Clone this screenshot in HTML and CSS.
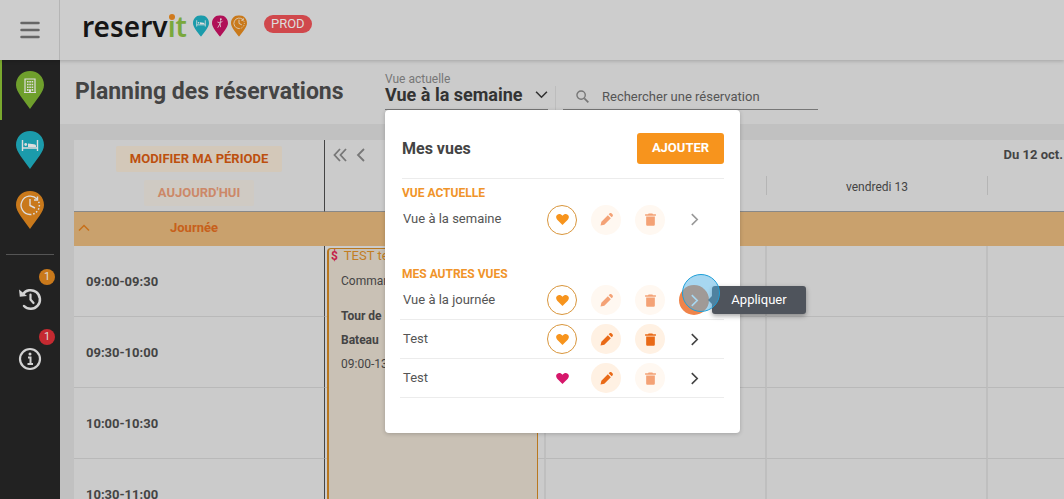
FILE: index.html
```
<!DOCTYPE html>
<html lang="fr">

<head>
  <meta charset="utf-8">
  <title>Planning des réservations</title>
  <link rel="stylesheet" href="styles.css">
</head>

<body>

  <!-- icons -->
  <svg class="sprite" aria-hidden="true">
    <symbol id="pin" viewBox="0 0 28 38">
      <path d="M14 0C6 0 0 6 0 14c0 7 8 15 14 24 6-9 14-17 14-24C28 6 22 0 14 0z" fill="currentColor"/>
    </symbol>
    <symbol id="building" viewBox="0 0 28 38">
      <path d="M9 21V8h10v13M8 21.5h12" fill="none" stroke="#ddd" stroke-width="1.2"/>
      <path d="M11 10h1.6v1.6H11zM13.3 10h1.6v1.6h-1.6zM15.6 10h1.6v1.6h-1.6zM11 12.7h1.6v1.6H11zM13.3 12.7h1.6v1.6h-1.6zM15.6 12.7h1.6v1.6h-1.6zM11 15.4h1.6V17H11zM13.3 15.4h1.6V17h-1.6zM15.6 15.4h1.6V17h-1.6zM11 18.1h1.6v1.6H11zM15.6 18.1h1.6v1.6h-1.6zM13 18.3h2V22h-2z" fill="#ddd"/>
    </symbol>
    <symbol id="bed" viewBox="0 0 28 38">
      <path d="M6.500 9v11M21.500 9v11M6.500 17h15" fill="none" stroke="#ddd" stroke-width="1.400"/>
      <circle cx="9.700" cy="13.500" r="1.400" fill="#ddd"/>
      <path d="M12 12.500l6 .8c1.300.2 2 .8 2 1.700v1h-8z" fill="#ddd"/>
    </symbol>
    <symbol id="clock" viewBox="0 0 28 38">
      <path d="M21 8A9.200 9.200 0 1 0 14 23.500" fill="none" stroke="#ddd" stroke-width="1.300"/>
      <path d="M14 23.500A9.200 9.200 0 0 0 22.300 10" fill="none" stroke="#ddd" stroke-width="1.500" stroke-dasharray="1.500 1.800"/>
      <path d="M14 8v6.500l5 2.500M21.500 5.500V9H18" fill="none" stroke="#ddd" stroke-width="1.400"/>
    </symbol>
    <symbol id="activity" viewBox="0 0 28 38">
      <circle cx="15.500" cy="7" r="1.500" fill="#ddd"/>
      <path d="M15 9l-1 6-4 7M14 15l1 6M9.500 12l5 2 4-4" fill="none" stroke="#ddd" stroke-width="1.400"/>
    </symbol>
    <symbol id="history" viewBox="0 0 24 24">
      <path d="M4.800 7.500A9.300 9.300 0 1 1 6 19" fill="none" stroke="currentColor" stroke-width="2.500" stroke-linecap="round"/>
      <path d="M1 2.500l.8 7.300 7.200-.8z" fill="currentColor"/>
      <path d="M12.500 7.500v5l3 3.500" fill="none" stroke="currentColor" stroke-width="2.200" stroke-linecap="round"/>
    </symbol>
    <symbol id="info" viewBox="0 0 24 24">
      <circle cx="12" cy="12" r="10" fill="none" stroke="currentColor" stroke-width="2.200"/>
      <path d="M10 10.500h2.500v6M9.500 17h5.500" fill="none" stroke="currentColor" stroke-width="2"/>
      <circle cx="12" cy="7" r="1.500" fill="currentColor"/>
    </symbol>
    <symbol id="heart" viewBox="0 0 24 24">
      <path d="M12 22L2.300 12.300C-.8 9.200-.2 5 2.500 3.200 5.500 1.100 9.300 2 12 5c2.700-3 6.500-3.900 9.500-1.800 2.700 1.800 3.300 6 .2 9.100z" fill="currentColor"/>
    </symbol>
    <symbol id="pencil" viewBox="0 0 24 24">
      <path d="M1 23l1.500-7L14.500 4l5.500 5.500L8 21.500zM16 2.500l1.500-1.500c1.200-1.200 3-1 4 0l1.500 1.500c1 1 1.200 2.800 0 4L21.500 8z" fill="currentColor"/>
    </symbol>
    <symbol id="trash" viewBox="0 0 24 24">
      <path d="M2 2.500h5.500l1-1.500h7l1 1.500H22V5H2zM4 6.500h16V21c0 1.500-1 2.500-2.500 2.500h-11C5 23.500 4 22.500 4 21z" fill="currentColor"/>
    </symbol>
    <symbol id="chevron" viewBox="0 0 12 12">
      <path d="M3.500 1l5 5-5 5" fill="none" stroke="currentColor" stroke-width="1.500"/>
    </symbol>
    <symbol id="search" viewBox="0 0 14 14">
      <circle cx="5.500" cy="5.500" r="4.500" fill="none" stroke="currentColor" stroke-width="1.500"/>
      <path d="M9 9l4.300 4.300" stroke="currentColor" stroke-width="1.800"/>
    </symbol>
  </svg>

  <header class="topbar">
    <button type="button" class="menu" aria-label="Menu">
      <svg width="20" height="18" viewBox="0 0 20 18"><path d="M1.500 2h17M1.500 9h17M1.500 16h17" stroke="currentColor" stroke-width="2.500" stroke-linecap="round"/></svg>
    </button>
    <a href="#" class="logo">
      <span class="logo-text">reserv<span class="logo-green"><span class="logo-i">i</span>t</span></span>
      <svg class="logo-pin blue" viewBox="0 0 28 38"><use href="#pin"/><use href="#bed"/></svg>
      <svg class="logo-pin pink" viewBox="0 0 28 38"><use href="#pin"/><use href="#activity"/></svg>
      <svg class="logo-pin orange" viewBox="0 0 28 38"><use href="#pin"/><use href="#clock"/></svg>
    </a>
    <span class="env">PROD</span>
  </header>

  <div class="page">
    <nav class="sidebar">
      <a href="#" class="side-link active" aria-label="Établissement"><svg class="side-pin green" viewBox="0 0 28 38"><use href="#pin"/><use href="#building"/></svg></a>
      <a href="#" class="side-link" aria-label="Chambres"><svg class="side-pin blue" viewBox="0 0 28 38"><use href="#pin"/><use href="#bed"/></svg></a>
      <a href="#" class="side-link" aria-label="Horaires"><svg class="side-pin orange" viewBox="0 0 28 38"><use href="#pin"/><use href="#clock"/></svg></a>
      <hr>
      <a href="#" class="side-link" aria-label="Historique"><svg class="side-icon"><use href="#history"/></svg><span class="badge">1</span></a>
      <a href="#" class="side-link" aria-label="Informations"><svg class="side-icon"><use href="#info"/></svg><span class="badge badge-red">1</span></a>
    </nav>

    <main>
      <div class="heading">
        <h1>Planning des réservations</h1>

        <div class="view">
          <span class="view-label" id="view-label">Vue actuelle</span>
          <button type="button" class="view-select" aria-describedby="view-label">
            Vue à la semaine
            <svg class="down"><use href="#chevron"/></svg>
          </button>

          <!-- views menu -->
          <section class="popup">
            <div class="popup-head">
              <h2>Mes vues</h2>
              <button type="button" class="add">AJOUTER</button>
            </div>

            <h3>VUE ACTUELLE</h3>
            <ul>
              <li>
                <span class="name">Vue à la semaine</span>
                <button type="button" class="round heart" aria-label="Favori"><svg><use href="#heart"/></svg></button>
                <button type="button" class="round off" aria-label="Modifier" disabled><svg><use href="#pencil"/></svg></button>
                <button type="button" class="round off" aria-label="Supprimer" disabled><svg><use href="#trash"/></svg></button>
                <button type="button" class="round go go-off" aria-label="Appliquer" disabled><svg><use href="#chevron"/></svg></button>
              </li>
            </ul>

            <h3 class="others">MES AUTRES VUES</h3>
            <ul class="lined">
              <li>
                <span class="name">Vue à la journée</span>
                <button type="button" class="round heart" aria-label="Favori"><svg><use href="#heart"/></svg></button>
                <button type="button" class="round off" aria-label="Modifier" disabled><svg><use href="#pencil"/></svg></button>
                <button type="button" class="round off" aria-label="Supprimer" disabled><svg><use href="#trash"/></svg></button>
                <div class="apply">
                  <button type="button" class="round go go-hover" aria-labelledby="tip"><svg><use href="#chevron"/></svg></button>
                  <span class="tooltip" role="tooltip" id="tip">Appliquer</span>
                  <span class="pointer"></span>
                </div>
              </li>
              <li>
                <span class="name">Test</span>
                <button type="button" class="round heart" aria-label="Favori"><svg><use href="#heart"/></svg></button>
                <button type="button" class="round" aria-label="Modifier"><svg><use href="#pencil"/></svg></button>
                <button type="button" class="round" aria-label="Supprimer"><svg><use href="#trash"/></svg></button>
                <button type="button" class="round go" aria-label="Appliquer"><svg><use href="#chevron"/></svg></button>
              </li>
              <li>
                <span class="name">Test</span>
                <button type="button" class="round heart-pink" aria-label="Favori"><svg><use href="#heart"/></svg></button>
                <button type="button" class="round" aria-label="Modifier"><svg><use href="#pencil"/></svg></button>
                <button type="button" class="round off" aria-label="Supprimer" disabled><svg><use href="#trash"/></svg></button>
                <button type="button" class="round go" aria-label="Appliquer"><svg><use href="#chevron"/></svg></button>
              </li>
            </ul>
          </section>
        </div>

        <label class="search">
          <svg><use href="#search"/></svg>
          <input type="text" placeholder="Rechercher une réservation" aria-label="Rechercher une réservation">
        </label>
      </div>

      <div class="board">
        <table>
          <colgroup>
            <col class="col-hours">
            <col class="col-day">
            <col class="col-day">
            <col class="col-day">
            <col>
          </colgroup>
          <thead>
            <tr class="period">
              <th rowspan="2" class="actions">
                <div class="actions-list">
                  <button type="button" class="soft">MODIFIER MA PÉRIODE</button>
                  <button type="button" class="soft" disabled>AUJOURD'HUI</button>
                </div>
              </th>
              <th colspan="4">
                <div class="range">
                  <button type="button" class="arrow" aria-label="Semaine précédente"><svg width="14" height="14" viewBox="0 0 14 14"><path d="M7 1L1.500 7 7 13M13 1L7.500 7l5.500 6" fill="none" stroke="currentColor" stroke-width="1.800"/></svg></button>
                  <button type="button" class="arrow" aria-label="Jour précédent"><svg width="14" height="14" viewBox="0 0 14 14"><path d="M10 1L4 7l6 6" fill="none" stroke="currentColor" stroke-width="1.800"/></svg></button>
                  <span class="dates">Du 12 oct.</span>
                </div>
              </th>
            </tr>
            <tr class="days">
              <th><span></span></th>
              <th><span></span></th>
              <th><span>vendredi 13</span></th>
              <th></th>
            </tr>
          </thead>
          <tbody>
            <tr class="group">
              <th>
                <div class="group-name">
                  <svg class="up"><use href="#chevron"/></svg>
                  <span>Journée</span>
                </div>
              </th>
              <td colspan="4"></td>
            </tr>
            <tr class="slot">
              <th>09:00-09:30</th>
              <td>
                <article class="event">
                  <p class="event-title"><b>$</b> TEST te</p>
                  <p>Comman</p>
                  <p class="strong">Tour de l</p>
                  <p class="strong">Bateau</p>
                  <p>09:00-13</p>
                </article>
              </td>
              <td></td><td></td><td></td>
            </tr>
            <tr class="slot"><th>09:30-10:00</th><td></td><td></td><td></td><td></td></tr>
            <tr class="slot"><th>10:00-10:30</th><td></td><td></td><td></td><td></td></tr>
            <tr class="slot"><th>10:30-11:00</th><td></td><td></td><td></td><td></td></tr>
          </tbody>
        </table>
      </div>
    </main>
  </div>

</body>
</html>
```
FILE: styles.css
```
* {
  box-sizing: border-box;
}

body {
  margin: 0;
  height: 100vh;
  overflow: hidden;
  display: flex;
  flex-direction: column;
  background: #c1c1c1;
  color: #444;
  font-family: Roboto, "Liberation Sans", sans-serif;
  font-size: 13px;
}

button {
  font-family: inherit;
  border: none;
  background: none;
  padding: 0;
  cursor: pointer;
}

h1, h2, h3, p, ul {
  margin: 0;
  padding: 0;
}

.sprite {
  position: absolute;
  width: 0;
  height: 0;
}

.green { color: #6f9f2c; }
.blue { color: #1b9bab; }
.pink { color: #b01057; }
.orange { color: #c9791b; }

/* top bar */
.topbar {
  position: relative;
  z-index: 1;
  flex: none;
  display: flex;
  align-items: center;
  height: 60px;
  background: #cdcdcd;
  box-shadow: 0 1px 4px rgba(0, 0, 0, 0.2);
}

.menu {
  width: 60px;
  height: 60px;
  border-right: 1px solid #b5b5b5;
  color: #666;
}

.menu svg {
  display: block;
  margin: auto;
}

.logo {
  display: flex;
  align-self: flex-start;
  align-items: center;
  gap: 3px;
  height: 52px;
  margin-left: 22px;
  text-decoration: none;
}

.logo-text {
  color: #151515;
  font-family: "Noto Sans", sans-serif;
  font-size: 28px;
  font-weight: 600;
  line-height: 52px;
  margin-right: 3px;
}

.logo-green {
  color: #7aa83c;
}

.logo-i {
  position: relative;
}

/* orange dot over the i */
.logo-i::before {
  content: "";
  position: absolute;
  top: 7px;
  left: 1px;
  width: 6px;
  height: 6px;
  border-radius: 50%;
  background: #d07a1e;
}

.logo-pin {
  width: 16px;
  height: 22px;
}

.env {
  height: 18px;
  margin: 0 0 12px 17px;
  padding: 0 7px;
  border-radius: 9px;
  background: #d0484c;
  color: #ddd;
  font-size: 13px;
  line-height: 17px;
}

/* sidebar */
.page {
  flex: 1;
  display: flex;
  min-height: 0;
}

.sidebar {
  flex: none;
  width: 60px;
  background: #222;
}

.side-link {
  position: relative;
  display: flex;
  align-items: center;
  justify-content: center;
  height: 60px;
  color: #d2d2d2;
}

.side-link.active {
  border-left: 2px solid #7aa82e;
  padding-right: 2px;
}

.side-pin {
  width: 28px;
  height: 38px;
}

.side-icon {
  width: 24px;
  height: 24px;
}

.sidebar hr {
  margin: 14px 6px;
  border: none;
  border-top: 1px solid #555;
}

.badge {
  position: absolute;
  top: 0;
  right: 5px;
  width: 16px;
  height: 16px;
  border-radius: 50%;
  background: #c9791b;
  color: #ddd;
  font-size: 11px;
  line-height: 16px;
  text-align: center;
}

.badge-red {
  background: #c52a31;
}

/* page heading */
main {
  flex: 1;
  display: flex;
  flex-direction: column;
  min-width: 0;
}

.heading {
  flex: none;
  display: flex;
  align-items: flex-end;
  height: 64px;
  padding: 0 15px 14px;
  background: #cbcbcb;
}

h1 {
  min-width: 273px;
  font-size: 23px;
  font-weight: bold;
  line-height: 36px;
}

.view {
  position: relative;
  display: flex;
  flex-direction: column;
  margin-left: 37px;
}

.view::after {
  content: "";
  position: absolute;
  right: -8px;
  bottom: 0;
  height: 24px;
  border-right: 1px solid #bdbdbd;
}

.view-label {
  color: #777;
  font-size: 12px;
  line-height: 14px;
}

.view-select {
  display: flex;
  align-items: center;
  justify-content: space-between;
  width: 163px;
  height: 24px;
  padding-bottom: 6px;
  border-bottom: 1px solid #777;
  color: #333;
  font-size: 18px;
  font-weight: bold;
  line-height: 17px;
}

.down {
  width: 13px;
  height: 13px;
  transform: rotate(90deg);
}

.search {
  display: flex;
  align-items: center;
  gap: 13px;
  width: 255px;
  height: 26px;
  margin-left: 15px;
  padding-left: 13px;
  border-bottom: 1px solid #777;
}

.search svg {
  flex: none;
  width: 13px;
  height: 13px;
  color: #777;
}

.search input {
  flex: 1;
  min-width: 0;
  padding: 0;
  border: none;
  outline: none;
  background: none;
  color: #555;
  font: 13px Roboto, sans-serif;
}

.search input::placeholder {
  color: #555;
}

/* views popup */
.popup {
  position: absolute;
  z-index: 5;
  top: 100%;
  left: 0;
  width: 355px;
  padding: 23px 16px 35px 15px;
  border-radius: 4px;
  background: #fff;
  box-shadow: 0 1px 4px rgba(0, 0, 0, 0.2);
}

.popup-head {
  display: flex;
  align-items: center;
  justify-content: space-between;
  height: 46px;
  margin-left: 2px;
  padding-bottom: 15px;
  border-bottom: 1px solid #ececec;
}

h2 {
  font-size: 16px;
}

.add {
  width: 87px;
  height: 31px;
  padding-bottom: 2px;
  border-radius: 3px;
  background: #f7941d;
  color: #fff;
  font-size: 13px;
  font-weight: bold;
}

h3 {
  padding: 7px 0 0 2px;
  color: #f0942a;
  font-size: 12px;
  font-weight: bold;
  line-height: 14px;
}

.others {
  margin-top: 21px;
}

.popup ul {
  list-style: none;
}

.popup li {
  display: flex;
  align-items: center;
  gap: 14px;
  height: 39px;
  padding: 0 15px 0 3px;
}

.lined li {
  border-bottom: 1px solid #ececec;
}

.name {
  flex: 1;
  padding-bottom: 2px;
  color: #555;
}

.round {
  display: block;
  width: 30px;
  height: 30px;
  border-radius: 50%;
  background: #fff1e3;
  color: #e96a17;
}

.round svg {
  display: block;
  width: 13px;
  height: 13px;
  margin: auto;
}

.round.off {
  background: #fff8f1;
  color: #f4a276;
}

.round.heart {
  border: 1px solid #d9963c;
  background: #fff;
  color: #f7941d;
}

.round.heart-pink {
  background: #fff;
  color: #d6176b;
}

.round.go {
  background: none;
  color: #444;
}

.round.go-off {
  color: #999;
}

.round.go-hover {
  background: #f0844a;
  color: #fff;
}

.apply {
  position: relative;
}

.tooltip {
  position: absolute;
  top: 1px;
  left: 33px;
  width: 94px;
  border-radius: 3px;
  background: #4f545c;
  box-shadow: 0 2px 5px rgba(0, 0, 0, 0.35);
  color: #fff;
  font-size: 13px;
  line-height: 28px;
  text-align: center;
}

.tooltip::before {
  content: "";
  position: absolute;
  top: 10px;
  left: -4px;
  border: 4px solid transparent;
  border-left: none;
  border-right-color: #4f545c;
}

.pointer {
  position: absolute;
  top: -11px;
  left: 3px;
  width: 38px;
  height: 38px;
  border: 1px solid #1e9fd8;
  border-radius: 50%;
  background: rgba(80, 175, 228, 0.5);
}

/* planning */
.board {
  flex: 1;
  min-height: 0;
  overflow: hidden;
  margin: 16px 0 0 14px;
  background: #cbcbcb;
}

table {
  width: 100%;
  table-layout: fixed;
  border-collapse: separate;
  border-spacing: 0;
}

.col-hours {
  width: 251px;
}

.col-day {
  width: 221px;
}

th, td {
  padding: 0;
}

.actions {
  height: 72px;
  border-right: 1px solid #444;
  border-bottom: 1px solid #888;
}

.actions-list {
  display: flex;
  flex-direction: column;
  align-items: center;
  gap: 8px;
}

.soft {
  height: 26px;
  padding: 0 14px;
  border-radius: 2px;
  background: #d3c8b9;
  color: #bd500f;
  font-size: 13px;
  font-weight: bold;
}

.soft:disabled {
  background: #cfcac3;
  color: #cc8868;
}

.period {
  height: 31px;
}

.range {
  display: flex;
  align-items: center;
  gap: 7px;
  padding: 0 1px 2px 8px;
}

.arrow {
  width: 14px;
  height: 14px;
  color: #777;
}

.arrow svg {
  display: block;
}

.dates {
  margin-left: auto;
}

.days th {
  height: 41px;
  border-bottom: 1px solid #888;
  color: #444;
  font-size: 12px;
  font-weight: normal;
  vertical-align: top;
}

.days span {
  display: block;
  height: 19px;
  margin-top: 5px;
  border-right: 1px solid #b5b5b5;
  line-height: 22px;
}

.group th,
.group td {
  height: 34px;
  background: #c9a16d;
}

.group-name {
  display: flex;
  align-items: center;
  padding: 0 27px 3px 4px;
  color: #c7601b;
}

.group-name span {
  flex: 1;
}

.up {
  width: 12px;
  height: 12px;
  color: #c7701b;
  transform: rotate(-90deg);
}

.slot th {
  height: 71px;
  padding-left: 12px;
  border-right: 1px solid #444;
  border-bottom: 1px solid #b9b9b9;
  text-align: left;
}

.slot td {
  position: relative;
  border-right: 2px solid #bfbfbf;
  border-bottom: 1px solid #b9b9b9;
}

.slot td:last-child {
  border-right: none;
}

.event {
  position: absolute;
  z-index: 1;
  top: 2px;
  left: 2px;
  right: 6px;
  height: 400px;
  padding-left: 12px;
  border: 1px solid #b9781f;
  border-left-width: 2px;
  border-radius: 4px;
  background: #c9c1b5;
  font-size: 12px;
  line-height: 24px;
}

.event p + p {
  height: 24px;
}

.event .event-title {
  height: 20px;
  margin-left: -10px;
  color: #c27d23;
  font-size: 13px;
  line-height: 14px;
}

.event-title b {
  margin-right: 3px;
  color: #c41e4a;
  font-size: 12px;
}

.event p:nth-child(2) {
  margin-bottom: 11px;
}

.strong {
  font-weight: bold;
}
```
